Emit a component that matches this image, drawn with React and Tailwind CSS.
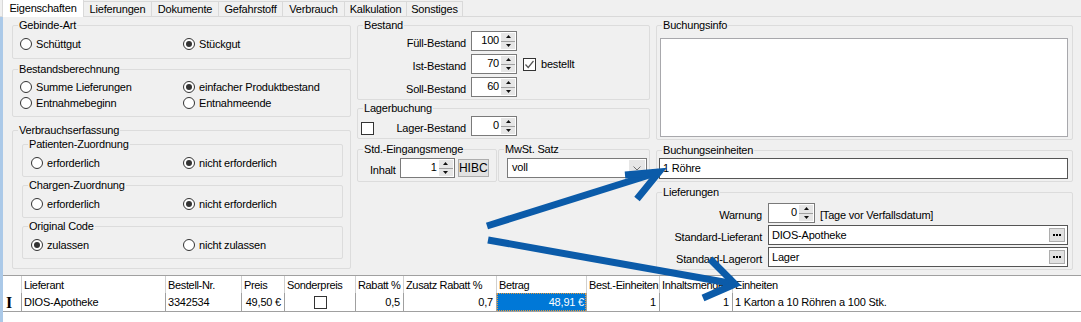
import React from "react";

// kleine Bausteine im Stil der Windows-Forms-Maske

function Group({ label, className = "", children }) {
  return (
    <fieldset className={"border border-[#dcdcdc] rounded-[2px] min-w-0 " + className}>
      <legend className="ml-[5px] px-[1px] leading-[12px]">{label}</legend>
      {children}
    </fieldset>
  );
}

function Radio({ checked, label }) {
  return (
    <div className="flex items-center h-[14px]">
      <span className="w-[12px] h-[12px] rounded-full border border-[#333] bg-white flex items-center justify-center shrink-0">
        {checked && <span className="w-[6px] h-[6px] rounded-full bg-[#333]" />}
      </span>
      <span className="ml-[4px] leading-[13px] whitespace-nowrap">{label}</span>
    </div>
  );
}

function Check({ checked }) {
  return (
    <span className="w-[13px] h-[13px] border border-[#333] bg-white flex items-center justify-center shrink-0">
      {checked && (
        <svg width="11" height="11" viewBox="0 0 11 11">
          <path d="M1.5 5.5 L4.2 8.5 L9.5 2" fill="none" stroke="#555" strokeWidth="1.2" />
        </svg>
      )}
    </span>
  );
}

function Spin({ value, className = "" }) {
  return (
    <div className={"flex h-[20px] border border-[#7a7a7a] bg-white shrink-0 " + className}>
      <div className="flex-1 text-right pr-[2px] leading-[16px]">{value}</div>
      <div className="w-[14px] my-[1px] mr-[1px] flex flex-col bg-[#e6e6e6]">
        <div className="flex-1 flex items-center justify-center border-b border-[#a0a0a0]">
          <svg width="5" height="3" viewBox="0 0 5 3"><path d="M0 3L2.5 0L5 3Z" fill="#111" /></svg>
        </div>
        <div className="flex-1 flex items-center justify-center">
          <svg width="5" height="3" viewBox="0 0 5 3"><path d="M0 0L2.5 3L5 0Z" fill="#111" /></svg>
        </div>
      </div>
    </div>
  );
}

function Dots() {
  return (
    <span className="w-[16px] h-[14px] mr-[2px] bg-[#e1e1e1] border border-[#adadad] flex items-center justify-center gap-[1px] shrink-0">
      <span className="w-[2px] h-[2px] bg-black" />
      <span className="w-[2px] h-[2px] bg-black" />
      <span className="w-[2px] h-[2px] bg-black" />
    </span>
  );
}

const tabs = [
  { name: "Eigenschaften", w: "w-[82px]", active: true },
  { name: "Lieferungen", w: "w-[68px]" },
  { name: "Dokumente", w: "w-[67px]" },
  { name: "Gefahrstoff", w: "w-[64px]" },
  { name: "Verbrauch", w: "w-[62px]" },
  { name: "Kalkulation", w: "w-[62px]" },
  { name: "Sonstiges", w: "w-[56px]" },
];

const cols = [
  { head: "Lieferant", val: "DIOS-Apotheke", w: "w-[144px]" },
  { head: "Bestell-Nr.", val: "3342534", w: "w-[76px]" },
  { head: "Preis", val: "49,50 €", w: "w-[43px]", right: true },
  { head: "Sonderpreis", val: null, w: "w-[71px]", box: true },
  { head: "Rabatt %", val: "0,5", w: "w-[48px]", right: true },
  { head: "Zusatz Rabatt %", val: "0,7", w: "w-[93px]", right: true },
  { head: "Betrag", val: "48,91 €", w: "w-[90px]", sel: true },
  { head: "Best.-Einheiten", val: "1", w: "w-[73px]", right: true },
  { head: "Inhaltsmenge", val: "1", w: "w-[73px]", right: true },
  { head: "Einheiten", val: "1 Karton a 10 Röhren a 100 Stk.", w: "flex-1" },
];

export default function App() {
  return (
    <div className="relative w-[1081px] h-[322px] overflow-hidden bg-[#f0f0f0] text-[11px] text-black tracking-[-0.2px] font-['Liberation_Sans',Arial,sans-serif]">
      {/* Reiter */}
      <div className="flex items-end h-[17px] pl-[2px] border-b border-[#d9d9d9]">
        {tabs.map((t) =>
          t.active ? (
            <div key={t.name} className={t.w + " h-[18px] -mb-[1px] bg-white border-x border-t border-[#d9d9d9] text-center leading-[16px]"}>
              {t.name}
            </div>
          ) : (
            <div key={t.name} className={t.w + " h-[15px] bg-[#f0f0f0] border-r border-t border-[#d9d9d9] text-center leading-[14px]"}>
              {t.name}
            </div>
          )
        )}
      </div>

      <div className="flex">
        <div className="w-[3px] h-[305px] bg-[#abc9e8] shrink-0" />
        <div className="flex-1">
          <div className="flex h-[258px] pt-[2px] pl-[9px] gap-[6px]">
            {/* linke Spalte */}
            <div className="w-[339px] flex flex-col">
              <Group label="Gebinde-Art" className="h-[40px]">
                <div className="flex pl-[7px] pt-[6px]">
                  <div className="w-[163px]"><Radio label="Schüttgut" /></div>
                  <Radio checked label="Stückgut" />
                </div>
              </Group>
              <Group label="Bestandsberechnung" className="h-[54px] mt-[4px]">
                <div className="grid grid-cols-[163px_1fr] gap-y-[2px] pl-[7px] pt-[5px]">
                  <Radio label="Summe Lieferungen" />
                  <Radio checked label="einfacher Produktbestand" />
                  <Radio label="Entnahmebeginn" />
                  <Radio label="Entnahmeende" />
                </div>
              </Group>
              <Group label="Verbrauchserfassung" className="h-[145px] mt-[7px]">
                <div className="flex flex-col gap-[2px] pl-[9px] pr-[7px] pt-[2px]">
                  {[
                    ["Patienten-Zuordnung", "erforderlich", "nicht erforderlich", 1],
                    ["Chargen-Zuordnung", "erforderlich", "nicht erforderlich", 1],
                    ["Original Code", "zulassen", "nicht zulassen", 0],
                  ].map(([title, a, b, sel]) => (
                    <Group key={title} label={title} className="h-[39px]">
                      <div className="flex pl-[8px] pt-[6px]">
                        <div className="w-[152px]"><Radio checked={sel === 0} label={a} /></div>
                        <Radio checked={sel === 1} label={b} />
                      </div>
                    </Group>
                  ))}
                </div>
              </Group>
            </div>

            {/* mittlere Spalte */}
            <div className="w-[293px] flex flex-col">
              <Group label="Bestand" className="h-[81px]">
                <div className="flex flex-col gap-[3px]">
                  <div className="flex items-end h-[20px]">
                    <span className="w-[108px] text-right leading-[13px] pb-[1px]">Füll-Bestand</span>
                    <Spin value="100" className="w-[46px] ml-[5px]" />
                  </div>
                  <div className="flex items-end h-[20px]">
                    <span className="w-[108px] text-right leading-[13px] pb-[1px]">Ist-Bestand</span>
                    <Spin value="70" className="w-[46px] ml-[5px]" />
                    <div className="flex items-center self-center ml-[6px]">
                      <Check checked />
                      <span className="ml-[5px]">bestellt</span>
                    </div>
                  </div>
                  <div className="flex items-end h-[20px]">
                    <span className="w-[108px] text-right leading-[13px] pb-[1px]">Soll-Bestand</span>
                    <Spin value="60" className="w-[46px] ml-[5px]" />
                  </div>
                </div>
              </Group>
              <Group label="Lagerbuchung" className="h-[37px] mt-[2px]">
                <div className="flex items-end h-[20px] mt-[2px] pl-[3px]">
                  <span className="mb-[1px]"><Check /></span>
                  <span className="w-[92px] text-right leading-[13px] pb-[1px]">Lager-Bestand</span>
                  <Spin value="0" className="w-[46px] ml-[5px]" />
                </div>
              </Group>
              <div className="flex gap-[1px] mt-[4px]">
                <Group label="Std.-Eingangsmenge" className="w-[140px] h-[39px]">
                  <div className="flex items-end h-[20px] mt-[3px] pl-[12px]">
                    <span className="leading-[13px] pb-[1px]">Inhalt</span>
                    <Spin value="1" className="w-[55px] ml-[4px]" />
                    <span className="self-center ml-[3px] w-[31px] h-[18px] bg-[#e1e1e1] border border-[#adadad] text-center leading-[16px] text-[12px] tracking-normal">
                      HIBC
                    </span>
                  </div>
                </Group>
                <Group label="MwSt. Satz" className="w-[152px] h-[39px]">
                  <div className="flex h-[20px] mt-[3px] ml-[8px] w-[140px] border border-[#7a7a7a] bg-white">
                    <span className="flex-1 pl-[4px] leading-[17px]">voll</span>
                    <span className="w-[16px] my-[1px] mr-[1px] bg-[#e6e6e6] flex items-center justify-center">
                      <svg width="8" height="5" viewBox="0 0 8 5">
                        <path d="M0.5 0.5 L4 4 L7.5 0.5" fill="none" stroke="#707070" strokeWidth="1" />
                      </svg>
                    </span>
                  </div>
                </Group>
              </div>
            </div>

            {/* rechte Spalte */}
            <div className="w-[417px] flex flex-col">
              <Group label="Buchungsinfo" className="h-[121px]">
                <div className="mt-[7px] ml-[3px] mr-[4px] h-[99px] bg-white border border-[#a8a8ac]" />
              </Group>
              <Group label="Buchungseinheiten" className="h-[38px] mt-[4px]">
                <div className="mt-[2px] ml-[2px] mr-[4px] h-[21px] bg-white border border-[#555] pl-[3px] leading-[18px]">
                  1 Röhre
                </div>
              </Group>
              <Group label="Lieferungen" className="h-[84px] mt-[4px]">
                <div className="flex flex-col gap-[2px] pt-[5px]">
                  <div className="flex items-end h-[20px]">
                    <span className="w-[105px] text-right leading-[13px] pb-[1px]">Warnung</span>
                    <Spin value="0" className="w-[47px] ml-[6px]" />
                    <span className="ml-[5px] leading-[13px] pb-[1px]">[Tage vor Verfallsdatum]</span>
                  </div>
                  <div className="flex items-end h-[20px]">
                    <span className="w-[105px] text-right leading-[13px] pb-[1px]">Standard-Lieferant</span>
                    <div className="flex items-center ml-[6px] w-[300px] h-[20px] bg-white border border-[#555]">
                      <span className="flex-1 pl-[3px]">DIOS-Apotheke</span>
                      <Dots />
                    </div>
                  </div>
                  <div className="flex items-end h-[20px]">
                    <span className="w-[105px] text-right leading-[13px] pb-[1px]">Standard-Lagerort</span>
                    <div className="flex items-center ml-[6px] w-[300px] h-[20px] bg-white border border-[#555]">
                      <span className="flex-1 pl-[3px]">Lager</span>
                      <Dots />
                    </div>
                  </div>
                </div>
              </Group>
            </div>
          </div>

          {/* Lieferanten-Tabelle */}
          <div className="h-[47px] bg-white border-t border-[#a0a0a0]">
            <div className="flex h-[17px] tracking-[-0.35px]">
              <div className="w-[18px] shrink-0" />
              {cols.map((c) => (
                <div key={c.head} className={c.w + " shrink-0 border-l border-[#d0d0d0] pl-[2px] leading-[18px] whitespace-nowrap overflow-hidden"}>
                  {c.head}
                </div>
              ))}
            </div>
            <div className="flex h-[19px] border-b border-[#a0a0a0]">
              <div className="w-[18px] shrink-0 pl-[3px] leading-[19px] text-[16px] font-bold font-['Liberation_Serif',serif]">I</div>
              {cols.map((c) => (
                <div key={c.head} className={c.w + " shrink-0 border-l border-[#a0a0a0] whitespace-nowrap overflow-hidden leading-[19px]"}>
                  {c.sel ? (
                    <div className="h-full bg-[#0078d7] text-white text-right pr-[2px] outline-1 outline-dotted outline-[#e89a3a] -outline-offset-1 leading-[18px]">
                      {c.val}
                    </div>
                  ) : c.box ? (
                    <div className="h-full flex items-center justify-center">
                      <Check />
                    </div>
                  ) : (
                    <div className={(c.right ? "text-right pr-[3px]" : "pl-[2px]")}>{c.val}</div>
                  )}
                </div>
              ))}
            </div>
          </div>
        </div>
      </div>

      {/* Markierungspfeile */}
      <svg className="absolute inset-0 pointer-events-none" width="1081" height="322" viewBox="0 0 1081 322">
        <g fill="none" stroke="#0b5ba9" strokeWidth="7" strokeLinejoin="miter">
          <path d="M487 226 L659 172" />
          <path d="M625 175 L659 172 L637 199" />
          <path d="M488 240 L735 284" />
          <path d="M710 259 L735 284 L703 298" />
        </g>
      </svg>
    </div>
  );
}
